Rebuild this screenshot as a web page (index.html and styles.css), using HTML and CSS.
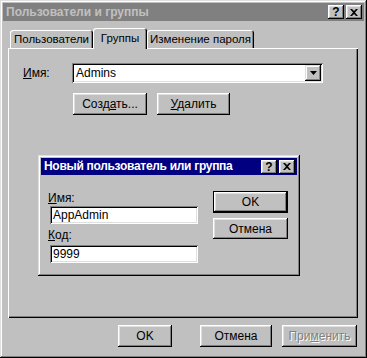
FILE: index.html
```html
<!DOCTYPE html>
<html lang="ru">

<head>
    <meta charset="UTF-8">
    <title>Пользователи и группы</title>
    <link rel="stylesheet" href="styles.css">
</head>

<body>
    <div class="window">
        <div class="titlebar inactive">
            <span class="title">Пользователи и группы</span>
            <div class="title-btns">
                <span class="tbtn">?</span>
                <span class="tbtn">
                    <svg width="8" height="7" viewBox="0 0 8 7"><path d="M0 0h2l2 2 2-2h2L5 3.5 8 7H6L4 5 2 7H0l3-3.5z" fill="#000"/></svg>
                </span>
            </div>
        </div>

        <div class="tabs">
            <div class="tab t1">Пользователи</div>
            <div class="tab t2 active">Группы</div>
            <div class="tab t3">Изменение пароля</div>
        </div>

        <div class="panel">
            <div class="row">
                <span class="label"><u>И</u>мя:</span>
                <div class="combo">
                    <span class="combo-text">Admins</span>
                    <span class="drop">
                        <svg width="7" height="4" viewBox="0 0 7 4"><path d="M0 0h7L3.5 4z" fill="#000"/></svg>
                    </span>
                </div>
            </div>
            <div class="actions">
                <button class="btn w74">Созд<u>а</u>ть...</button>
                <button class="btn w73"><u>У</u>далить</button>
            </div>
        </div>

        <div class="footer">
            <button class="btn w54">OK</button>
            <button class="btn w72 gap28">Отмена</button>
            <button class="btn w75 disabled">При<u>м</u>енить</button>
        </div>

        <div class="dialog">
            <div class="titlebar">
                <span class="title tight">Новый пользователь или группа</span>
                <div class="title-btns">
                    <span class="tbtn">?</span>
                    <span class="tbtn">
                        <svg width="8" height="7" viewBox="0 0 8 7"><path d="M0 0h2l2 2 2-2h2L5 3.5 8 7H6L4 5 2 7H0l3-3.5z" fill="#000"/></svg>
                    </span>
                </div>
            </div>
            <div class="dialog-body">
                <div class="fields">
                    <span class="flabel"><u>И</u>мя:</span>
                    <div class="field">AppAdmin</div>
                    <span class="flabel second"><u>К</u>од:</span>
                    <div class="field second">9999</div>
                </div>
                <div class="side">
                    <button class="btn w75 default">OK</button>
                    <button class="btn w75 cancel">Отмена</button>
                </div>
            </div>
        </div>
    </div>
</body>

</html>
```

FILE: styles.css
```css
body {
    margin: 0;
    padding: 0;
    background: #c0c0c0;
    font-family: "Liberation Sans", Arial, sans-serif;
    font-size: 12px;
    color: #000;
}

u {
    text-decoration: underline;
    text-underline-offset: 1px;
}

/* windows */

.window {
    position: relative;
    width: 367px;
    height: 358px;
    box-sizing: border-box;
    padding: 3px;
    background: #c0c0c0;
    box-shadow: inset -1px -1px #000, inset 1px 1px #dfdfdf,
        inset -2px -2px #808080, inset 2px 2px #fff;
}

.titlebar {
    display: flex;
    align-items: center;
    justify-content: space-between;
    height: 18px;
    padding: 0 2px 0 3px;
    background: #000080;
    color: #fff;
}

.titlebar.inactive {
    background: #808080;
    color: #c0c0c0;
}

.title {
    font-weight: bold;
    font-size: 12px;
    line-height: 18px;
    white-space: nowrap;
}

.title.tight {
    letter-spacing: -0.3px;
    line-height: 17px;
}

.title-btns {
    display: flex;
    gap: 2px;
}

.tbtn {
    display: flex;
    align-items: center;
    justify-content: center;
    width: 16px;
    height: 14px;
    background: #c0c0c0;
    color: #000;
    font-weight: bold;
    font-size: 12px;
    box-shadow: inset -1px -1px #000, inset 1px 1px #fff,
        inset -2px -2px #808080, inset 2px 2px #dfdfdf;
}

/* tabs */

.tabs {
    display: flex;
    align-items: flex-end;
    height: 20px;
    margin: 7px 0 0 7px;
}

.tab {
    height: 18px;
    line-height: 19px;
    font-size: 11.5px;
    box-sizing: border-box;
    text-align: center;
    border-radius: 3px 3px 0 0;
    box-shadow: inset 1px 1px #fff, inset -1px 0 #000, inset -2px 0 #808080;
}

.t1 { width: 83px; }
.t2 { width: 54px; }
.t3 { width: 107px; }

.tab.active {
    position: relative;
    z-index: 2;
    height: 21px;
    margin-bottom: -1px;
    line-height: 20px;
    background: #c0c0c0;
}

.panel {
    height: 270px;
    margin: 0 6px 0 5px;
    padding: 15px;
    box-sizing: border-box;
    box-shadow: inset 1px 1px #fff, inset -1px -1px #000, inset -2px -2px #808080;
}

.row {
    display: flex;
    align-items: center;
}

.label {
    width: 49px;
    line-height: 20px;
}

.combo {
    display: flex;
    align-items: center;
    justify-content: space-between;
    width: 251px;
    height: 20px;
    padding: 2px;
    box-sizing: border-box;
    background: #fff;
    box-shadow: inset 1px 1px #808080, inset -1px -1px #fff,
        inset 2px 2px #000, inset -2px -2px #dfdfdf;
}

.combo-text {
    padding-left: 2px;
}

.drop {
    display: flex;
    align-items: center;
    justify-content: center;
    width: 16px;
    height: 16px;
    background: #c0c0c0;
    box-shadow: inset -1px -1px #000, inset 1px 1px #dfdfdf,
        inset -2px -2px #808080, inset 2px 2px #fff;
}

.actions {
    display: flex;
    gap: 10px;
    margin: 10px 0 0 50px;
}

/* buttons */

.btn {
    height: 22px;
    padding: 0;
    border: 0;
    background: #c0c0c0;
    font-family: inherit;
    font-size: 12px;
    color: #000;
    box-shadow: inset -1px -1px #000, inset 1px 1px #fff,
        inset -2px -2px #808080, inset 2px 2px #dfdfdf;
}

.btn.default {
    box-shadow: inset -1px -1px #000, inset 1px 1px #000,
        inset -2px -2px #000, inset 2px 2px #fff,
        inset -3px -3px #808080, inset 3px 3px #dfdfdf;
}

.btn.disabled {
    color: #808080;
    text-shadow: 1px 1px #fff;
}

.w54 { width: 54px; }
.w72 { width: 72px; }
.w73 { width: 73px; }
.w74 { width: 74px; }
.w75 { width: 75px; }

.footer {
    display: flex;
    justify-content: flex-end;
    gap: 10px;
    margin: 7px 7px 0 0;
}

.footer .gap28 {
    margin-left: 18px;
}

/* inner dialog */

.dialog {
    position: absolute;
    left: 38px;
    top: 155px;
    width: 262px;
    height: 121px;
    box-sizing: border-box;
    padding: 3px;
    background: #c0c0c0;
    box-shadow: inset -1px -1px #000, inset 1px 1px #dfdfdf,
        inset -2px -2px #808080, inset 2px 2px #fff;
}

.dialog .titlebar {
    height: 17px;
}

.dialog-body {
    display: flex;
    justify-content: space-between;
    padding: 16px 9px 0 7px;
}

.fields {
    display: flex;
    flex-direction: column;
    align-items: flex-start;
}

.flabel {
    line-height: 14px;
}

.flabel.second {
    margin-top: 4px;
}

.field {
    width: 148px;
    height: 18px;
    margin: 1px 0 0 2px;
    padding: 0 3px;
    box-sizing: border-box;
    line-height: 19px;
    background: #fff;
    box-shadow: inset 1px 1px #808080, inset -1px -1px #fff,
        inset 2px 2px #000, inset -2px -2px #dfdfdf;
}

.field.second {
    margin-top: 3px;
}

.side {
    display: flex;
    flex-direction: column;
    gap: 5px;
}

.side .cancel {
    height: 21px;
}
```
